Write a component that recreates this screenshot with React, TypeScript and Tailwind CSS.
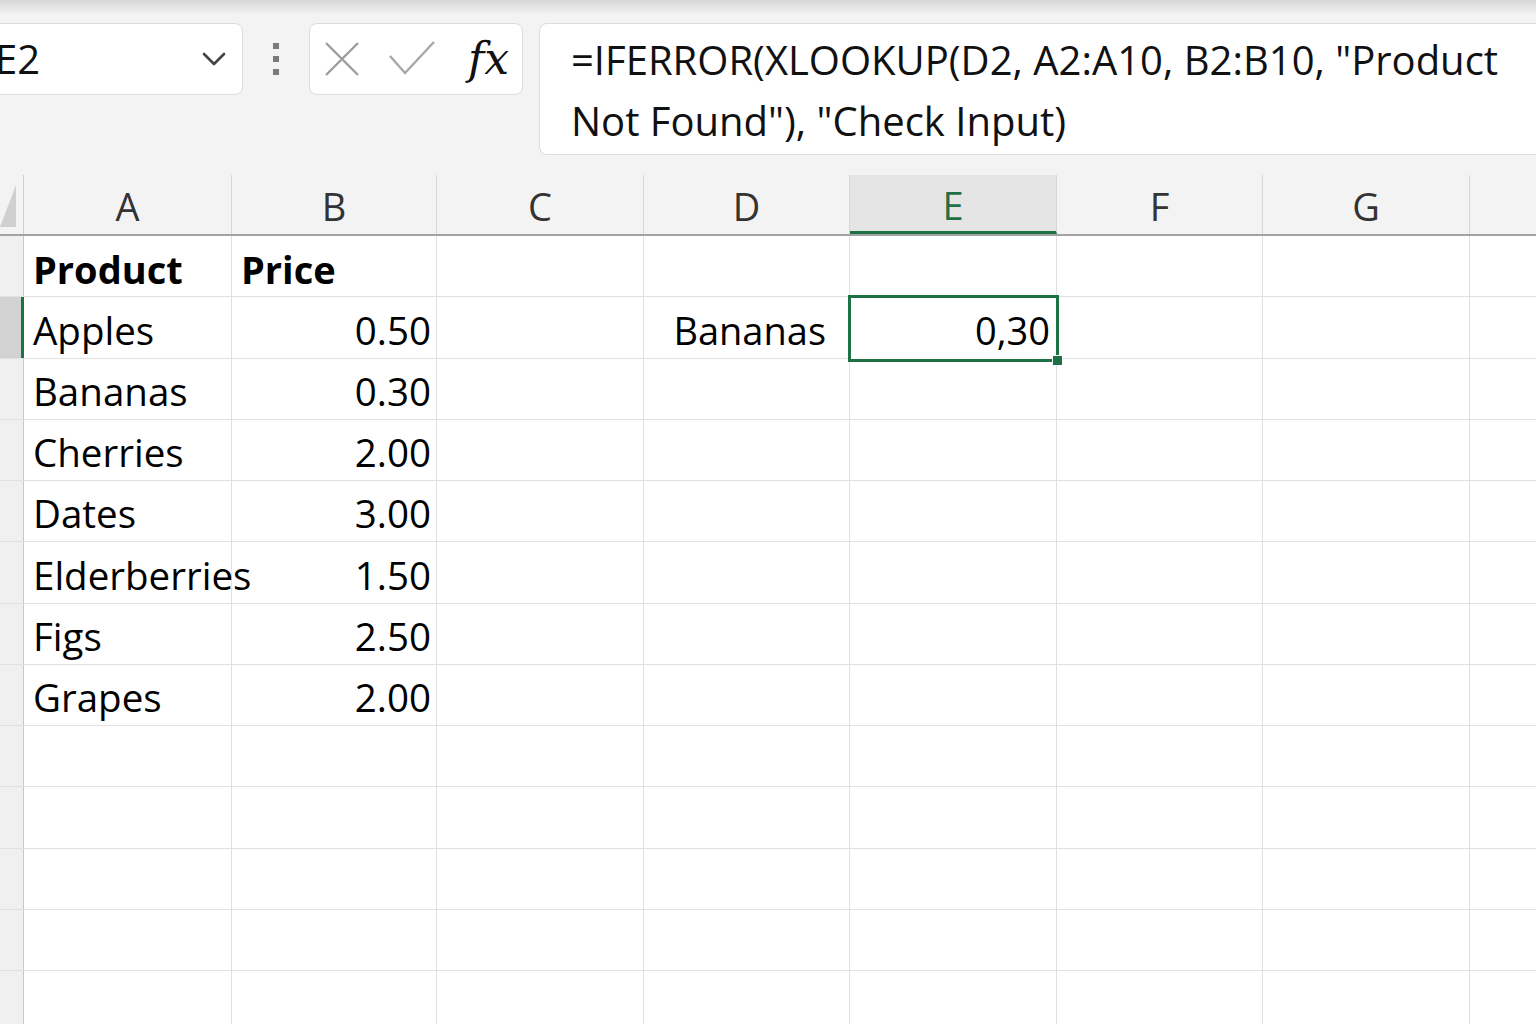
import { ChevronDown } from "lucide-react";

const COLS = [
  { key: "A", w: 208 },
  { key: "B", w: 205 },
  { key: "C", w: 207 },
  { key: "D", w: 206 },
  { key: "E", w: 207 },
  { key: "F", w: 206 },
  { key: "G", w: 207 },
  { key: "H", w: 207 },
];

type Cell = { text?: string; bold?: boolean; right?: boolean };

const DATA: Record<number, Record<string, Cell>> = {
  0: { A: { text: "Product", bold: true }, B: { text: "Price", bold: true } },
  1: { A: { text: "Apples" }, B: { text: "0.50", right: true }, D: { text: "Bananas", right: true } },
  2: { A: { text: "Bananas" }, B: { text: "0.30", right: true } },
  3: { A: { text: "Cherries" }, B: { text: "2.00", right: true } },
  4: { A: { text: "Dates" }, B: { text: "3.00", right: true } },
  5: { A: { text: "Elderberries" }, B: { text: "1.50", right: true } },
  6: { A: { text: "Figs" }, B: { text: "2.50", right: true } },
  7: { A: { text: "Grapes" }, B: { text: "2.00", right: true } },
};

const ROWS = 13;

function Toolbar() {
  return (
    <div className="flex h-[160px] items-start pt-[23px]">
      {/* name box */}
      <div className="-ml-[40px] flex h-[72px] w-[283px] shrink-0 items-center justify-between rounded-[8px] border border-[#dcdcdc] bg-white pl-[34px] pr-[8px]">
        <span className="text-[40px] leading-none text-[#111]">E2</span>
        <ChevronDown size={40} strokeWidth={1.6} className="text-[#444]" />
      </div>

      <div className="flex h-[72px] w-[66px] shrink-0 flex-col items-center justify-center gap-[7px]">
        <span className="h-[6px] w-[6px] bg-[#7a7a7a]" />
        <span className="h-[6px] w-[6px] bg-[#7a7a7a]" />
        <span className="h-[6px] w-[6px] bg-[#7a7a7a]" />
      </div>

      {/* cancel / enter / fx */}
      <div className="flex h-[72px] w-[214px] shrink-0 items-center rounded-[8px] border border-[#dcdcdc] bg-white pl-[12px]">
        <svg width="40" height="40" viewBox="0 0 40 40" className="text-[#9e9e9e]">
          <path d="M4 4 L36 36 M36 4 L4 36" stroke="currentColor" strokeWidth="2.4" fill="none" />
        </svg>
        <svg width="50" height="40" viewBox="0 0 50 40" className="ml-[26px] text-[#a8a8a8]">
          <path d="M2 17 L17 34 L46 3" stroke="currentColor" strokeWidth="2.4" fill="none" />
        </svg>
        <span className="ml-[30px] font-['DejaVu_Serif',serif] text-[44px] italic leading-none text-[#111]">fx</span>
      </div>

      {/* formula bar */}
      <div className="ml-[16px] h-[132px] w-[1040px] shrink-0 rounded-[8px] border border-[#dcdcdc] bg-white pl-[31px] pt-[5px]">
        <p className="text-[40px] leading-[61px] text-[#111]">
          =IFERROR(XLOOKUP(D2, A2:A10, B2:B10, "Product
          <br />
          Not Found"), "Check Input)
        </p>
      </div>
    </div>
  );
}

function Grid() {
  return (
    <div className="relative">
      {/* column headers */}
      <div className="flex h-[76px] border-b-2 border-[#a3a3a3] pt-[15px]">
        <div className="relative w-[24px] shrink-0 border-r border-[#cfcfcf]">
          <div className="absolute left-0 top-[10px] h-0 w-0 border-b-[42px] border-l-[16px] border-b-[#d0d0d0] border-l-transparent" />
        </div>
        {COLS.map((c) => (
          <div
            key={c.key}
            style={{ width: c.w }}
            className={
              c.key === "E"
                ? "flex shrink-0 items-center justify-center border-b-[3px] border-r border-b-[#1e7145] border-r-[#d8d8d8] bg-[#e5e5e5] pt-[5px] text-[38px] text-[#1e7145]"
                : "flex shrink-0 items-center justify-center border-r border-[#d8d8d8] pt-[3px] text-[38px] text-[#333]"
            }
          >
            {c.key}
          </div>
        ))}
      </div>

      {/* rows */}
      {Array.from({ length: ROWS }).map((_, r) => (
        <div key={r} className="flex h-[61.25px] border-b border-[#e0e0e0] bg-white">
          <div
            className={
              r === 1
                ? "w-[24px] shrink-0 border-r-[3px] border-[#1e7145] bg-[#d2d2d2]"
                : "w-[24px] shrink-0 border-r border-[#c8c8c8] bg-[#f0f0f0]"
            }
          />
          {COLS.map((c) => {
            const cell = DATA[r]?.[c.key];
            return (
              <div
                key={c.key}
                style={{ width: c.w }}
                className={
                  cell?.right
                    ? "flex shrink-0 items-center justify-end overflow-visible whitespace-nowrap border-r border-[#e0e0e0] pr-[5px] pt-[6px]"
                    : "flex shrink-0 items-center overflow-visible whitespace-nowrap border-r border-[#e0e0e0] pl-[9px] pt-[6px]"
                }
              >
                {cell && (
                  <span
                    className={
                      cell.bold
                        ? "relative z-10 text-[38px] font-bold text-black"
                        : c.key === "D"
                          ? "relative z-10 mr-[18px] text-[38px] text-black"
                          : "relative z-10 text-[38.5px] text-black"
                    }
                  >
                    {cell.text}
                  </span>
                )}
              </div>
            );
          })}
        </div>
      ))}

      {/* selected cell E2 */}
      <div className="absolute left-[848px] top-[135px] flex h-[67px] w-[211px] items-center justify-end border-[3px] border-[#1e7145] bg-white pr-[6px] pt-[4px]">
        <span className="text-[38px] text-black">0,30</span>
        <div className="absolute -bottom-[7px] -right-[7px] h-[11px] w-[11px] border border-white bg-[#1e7145]" />
      </div>
    </div>
  );
}

export default function App() {
  return (
    <div className="relative h-[1024px] w-[1536px] overflow-hidden bg-[#f3f3f3] font-['Open_Sans',sans-serif]">
      <div className="pointer-events-none absolute inset-x-0 top-0 h-[14px] bg-gradient-to-b from-[#d6d6d6] to-[#f3f3f3]" />
      <Toolbar />
      <Grid />
    </div>
  );
}
